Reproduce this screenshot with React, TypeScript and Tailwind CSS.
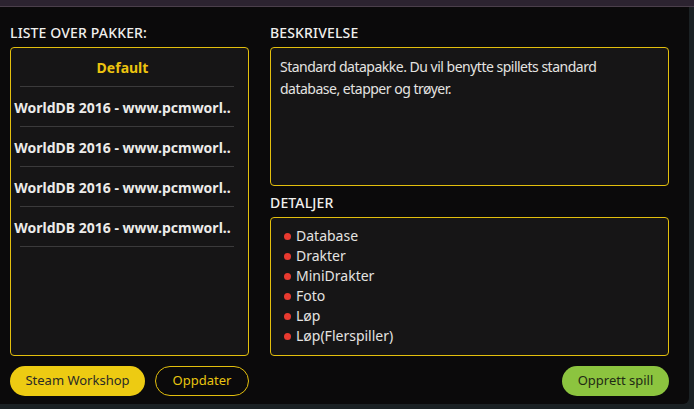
import React from "react";

const items = [
  "WorldDB 2016 - www.pcmworl..",
  "WorldDB 2016 - www.pcmworl..",
  "WorldDB 2016 - www.pcmworl..",
  "WorldDB 2016 - www.pcmworl..",
];

const details = ["Database", "Drakter", "MiniDrakter", "Foto", "Løp", "Løp(Flerspiller)"];

export default function App() {
  return (
    <div
      className="relative w-[694px] h-[409px] overflow-hidden bg-[#1b2124]"
      style={{ fontFamily: '"Noto Sans", "Open Sans", sans-serif' }}
    >
      <div className="h-[7px] bg-[#2c2330] border-b border-[#4b3f4b]" />
      <div className="w-[689px] h-[397px] bg-[#0b0a0b] rounded-br-[6px] pl-[10px] pr-[20px] pt-[17px] flex flex-col">
        <div className="flex gap-[21px]">
          {/* Left column */}
          <div className="w-[239px] flex flex-col">
            <div className="h-[18px] leading-[18px] text-[14px] font-medium tracking-[0.15px] text-[#f0efed] mb-[5px] whitespace-nowrap">LISTE OVER PAKKER:</div>
            <div className="h-[309px] border border-[#e3bf0d] rounded-[4px] bg-[#161516] pr-[14px]">
              <div className="h-[38px] flex items-center justify-center text-[14px] font-bold text-[#ecc30f]">Default</div>
              <div className="ml-[9px] h-px bg-[#3b3a3b]" />
              {items.map((t, i) => (
                <React.Fragment key={i}>
                  <div className="h-[39px] pt-[2px] flex items-center justify-center text-[14px] font-bold text-[#ecebe9] whitespace-nowrap">
                    {t}
                  </div>
                  <div className="ml-[9px] h-px bg-[#3b3a3b]" />
                </React.Fragment>
              ))}
            </div>
          </div>
          {/* Right column */}
          <div className="w-[399px] flex flex-col">
            <div className="h-[18px] leading-[18px] text-[14px] font-medium tracking-[0.15px] text-[#f0efed] mb-[5px]">BESKRIVELSE</div>
            <div className="h-[139px] border border-[#e3bf0d] rounded-[4px] bg-[#161516] pl-[9px] pr-[9px] pt-[8px] text-[14px] tracking-[-0.5px] leading-[22px] text-[#e4e3e1]">
              Standard datapakke. Du vil benytte spillets standard database, etapper og trøyer.
            </div>
            <div className="h-[18px] leading-[18px] text-[14px] font-medium tracking-[0.15px] text-[#f0efed] mt-[8px] mb-[5px]">DETALJER</div>
            <div className="h-[139px] border border-[#e3bf0d] rounded-[4px] bg-[#161516] pl-[13px] pt-[8px] text-[14px] leading-[20px] text-[#e4e3e1]">
              {details.map((d) => (
                <div key={d} className="flex items-center gap-[5px] h-[20px]">
                  <span className="w-[7px] h-[7px] rounded-full bg-[#e8392f] shrink-0" />
                  <span>{d}</span>
                </div>
              ))}
            </div>
          </div>
        </div>
        <div className="flex items-center mt-[10px]">
          <button className="w-[135px] h-[30px] rounded-full bg-[#edcb12] text-[13px] text-[#2a2a26]">Steam Workshop</button>
          <button className="ml-[10px] w-[94px] h-[30px] rounded-full border border-[#e3bf0d] text-[13px] text-[#e9c510]">Oppdater</button>
          <div className="flex-1" />
          <button className="w-[107px] h-[30px] rounded-full bg-[#8cc43f] text-[13px] text-[#1f2a14]">Opprett spill</button>
        </div>
      </div>
    </div>
  );
}
